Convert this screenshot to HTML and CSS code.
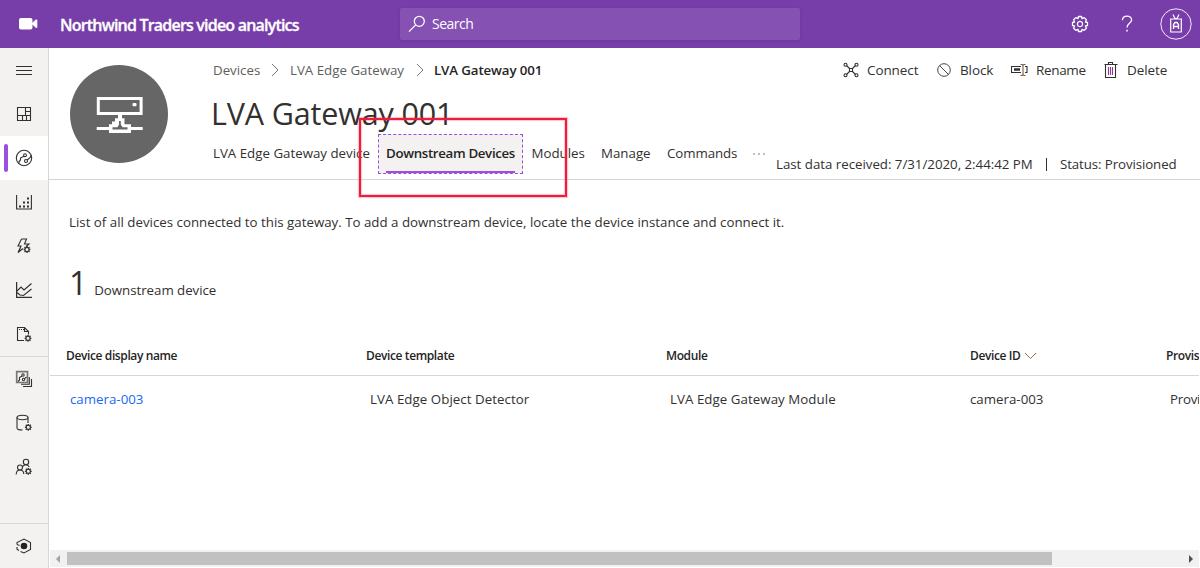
FILE: index.html
```html
<!DOCTYPE html>
<html lang="en">
<head>
<meta charset="utf-8">
<title>Northwind Traders video analytics</title>
<link rel="stylesheet" href="styles.css">
</head>
<body>
<svg class="defs" width="0" height="0">
  <defs>
    <g id="mini-gear" fill="none">
      <circle r="2.1" stroke-width="1.2"/>
      <path d="M0-3.4v1.2M0 2.2v1.2M-3.4 0h1.2M2.2 0h1.2M-2.5-2.5l.9.9M1.6 1.6l.9.9M2.5-2.5l-.9.9M-1.6 1.6l-.9.9" stroke-width="1.3"/>
    </g>
  </defs>
</svg>
<header class="topbar">
  <div class="brand-icon"><svg width="20" height="14" viewBox="0 0 20 14"><rect x="0" y="1" width="13.5" height="11.5" rx="2" fill="#fff"/><path d="M12.5 6.7L16.8 2.6Q18.3 2 18.3 3.5V10Q18.3 11.5 16.8 10.8Z" fill="#fff"/></svg></div>
  <div class="brand">Northwind Traders video analytics</div>
  <div class="search"><svg width="18" height="18" viewBox="0 0 18 18" fill="none" stroke="#fff" stroke-width="1.3"><circle cx="11.3" cy="6.3" r="5"/><path d="M7.7 9.9L1 16.6"/></svg><span>Search</span></div>
  <div class="top-actions">
    <svg width="18" height="18" viewBox="-9 -9 18 18" fill="none" stroke="#fff" stroke-width="1.3" stroke-linejoin="round"><path d="M-1.5-7.5H1.5L2-5.4L4.2-6.4L6.4-4.2L5.4-2L7.5-1.5V1.5L5.4 2L6.4 4.2L4.2 6.4L2 5.4L1.5 7.5H-1.5L-2 5.4L-4.2 6.4L-6.4 4.2L-5.4 2L-7.5 1.5V-1.5L-5.4-2L-6.4-4.2L-4.2-6.4L-2-5.4Z"/><circle r="2.6"/></svg>
    <svg width="12" height="18" viewBox="0 0 12 18" fill="none" stroke="#fff" stroke-width="1.3"><path d="M1.4 5.2C1.4-.2 10.6-.2 10.6 5C10.6 8.2 6 8.6 6 12.5"/><path d="M6 14.8v1.6" stroke-width="1.5"/></svg>
    <svg width="32" height="32" viewBox="0 0 32 32" fill="none" stroke="#fff"><circle cx="16" cy="16" r="15.2" stroke-width=".9"/><path d="M10.700 11H21.300V24H10.700Z" stroke-width="1.2"/><path d="M13 6.500L15 10.500M19 6.500L17 10.500M14.500 10.500h3" stroke-width="1.200"/><path d="M13.500 21V16.500L15 14.500H17L18.500 16.500V21M13.500 18.500H18.500" stroke-width="1.3"/></svg>
  </div>
</header>
<div class="shell">
  <nav class="rail">
    <a class="rail-item"><svg width="16" height="10" viewBox="0 0 16 10" stroke="#323130"><path d="M0 .5h16M0 4.500h16M0 8.500h16"/></svg></a>
    <a class="rail-item"><svg class="ico" width="16" height="16" viewBox="0 0 16 16"><path d="M1.500 1.500h13v13h-13zM9.500 1.500v8M1.500 9.500h13M9.500 5.500h5M10.500 9.500v5M6.500 9.500v5"/></svg></a>
    <a class="rail-item active"><svg class="ico" width="18" height="18" viewBox="0 0 18 18"><circle cx="9" cy="9" r="7.700"/><circle cx="10" cy="6.200" r="1.400"/><circle cx="11" cy="12" r="1.500"/><path d="M8.800 7.200L5.500 9v2L4 12.500v2M12.200 11l3-2.500 1-2"/></svg></a>
    <a class="rail-item"><svg class="ico" width="16" height="16" viewBox="0 0 16 16"><path d="M.6 1v14h14.800V1"/><path d="M3 12.500h2M7 12.500h2M11 12.500h2M7 8.500h2M11 8.500h2M11 4.500h2" stroke-width="2"/></svg></a>
    <a class="rail-item"><svg class="ico" width="16" height="18" viewBox="0 0 16 18"><path d="M5.500 2h5L8.500 7H13L10 9.500M5.500 2L2 9h3L2 15.500l5-4M5 9l-2.500 6.500"/><use href="#mini-gear" x="11" y="12.500"/></svg></a>
    <a class="rail-item"><svg class="ico" width="16" height="16" viewBox="0 0 16 16"><path d="M.6 0v15.400H16" stroke-width="1.300"/><path d="M1 9l4-4 3 3 7.500-6.500M1 10.500l3 2.500 3.500.5L15.500 7"/></svg></a>
    <a class="rail-item"><svg class="ico" width="16" height="16" viewBox="0 0 16 16"><path d="M8 14.500H1.500v-13h7l4 4v3M8.500 1.500v4h4M3 3.500h1M5 3.500h1M7 3.500h1"/><use href="#mini-gear" x="12" y="12.300"/></svg></a>
    <a class="rail-item divided"><svg class="ico" width="18" height="18" viewBox="0 0 18 18"><path d="M1.700 1.700h10.800v10.800H1.700z" stroke="#777" stroke-width="1.700"/><path d="M14.300 7v7.300H6M16.500 9v7.500H8"/><circle cx="8" cy="5" r="1.200"/><circle cx="8.500" cy="9.500" r="1.200"/><path d="M7 6L4.500 7.500V10L3 11.500M9.500 8.700l2-1.700"/></svg></a>
    <a class="rail-item"><svg class="ico" width="18" height="18" viewBox="0 0 18 18"><ellipse cx="7.500" cy="3.500" rx="5.500" ry="2.200"/><path d="M2 3.500v10.500c0 1.200 2 2 5.500 2M13 3.500V9"/><use href="#mini-gear" x="13.300" y="13.300"/></svg></a>
    <a class="rail-item"><svg class="ico" width="18" height="18" viewBox="0 0 18 18"><circle cx="11" cy="4" r="2.700"/><circle cx="5" cy="9.500" r="2.500"/><path d="M1.200 16.500c0-6 7.500-6 7.600-.5M7.500 8.500l2-1.500c2-.5 4 .5 4.800 2"/><use href="#mini-gear" x="13.300" y="13.300"/></svg></a>
    <a class="rail-item rail-bottom"><svg class="ico" width="18" height="16" viewBox="0 0 18 16"><path d="M2 6.500V4.500L9 1l6.500 3.500v7L9 15l-3.500-1.500M4 12.500l-2-1.200V9"/><circle cx="9" cy="8" r="3.300" fill="#222" stroke="none"/><path d="M2 6.500l2.500 1"/></svg></a>
  </nav>
  <main class="content">
    <section class="device-head">
      <div class="avatar"><svg width="48" height="40" viewBox="0 0 48 40" fill="#fff"><rect x="3.300" y="4.500" width="42.800" height="15" fill="none" stroke="#fff" stroke-width="3"/><rect x="37.500" y="9" width="4" height="3.300" rx="1"/><path d="M23 21h4v3.300h2.500v6H36V33h11.700v3H36v3H14v-3H1.700v-3H14v-2.700h3V27.500h3v-3.200h3zM24 27v3.500l-1.500 2.800h-5v2.200h15v-2.200h-5l-1.700-2.800V27z" fill-rule="evenodd"/></svg></div>
      <div class="head-main">
        <div class="head-top">
          <div class="crumbs"><a class="c1">Devices</a><svg width="9" height="14" viewBox="0 0 9 14"><path d="M1 1l6 6-6 6"/></svg><a class="c2">LVA Edge Gateway</a><svg width="9" height="14" viewBox="0 0 9 14"><path d="M1 1l6 6-6 6"/></svg><b>LVA Gateway 001</b></div>
          <div class="commands">
            <span class="cmd connect"><svg class="ico" width="16" height="16" viewBox="0 0 16 16"><path d="M3.500 3.500l3 3M12.500 3.500l-3 3M3.500 12.500l3-3M12.500 12.500l-3-3M6.500 6.500h3v3h-3z"/><circle cx="2.500" cy="2.800" r="1.500"/><circle cx="13.500" cy="2.800" r="1.500"/><circle cx="2.500" cy="13.200" r="1.500"/><circle cx="13.500" cy="13.200" r="1.500"/></svg><span>Connect</span></span>
            <span class="cmd block"><svg class="ico thin" width="16" height="16" viewBox="0 0 16 16"><circle cx="8" cy="8" r="6.300"/><path d="M3.500 3.500l9 9"/></svg><span>Block</span></span>
            <span class="cmd rename"><svg class="ico" width="18" height="14" viewBox="0 0 18 14"><path d="M10 3.500H.5v6H10M14 3.500h2v6h-2"/><path d="M3 6.500h6" stroke-width="2.500"/><path d="M12 2v10M9.500 1.500h1.500l1 1 1-1h1.500M9.500 12.500h1.500l1-1 1 1h1.500" stroke="#75604f"/></svg><span>Rename</span></span>
            <span class="cmd delete"><svg class="ico" width="16" height="18" viewBox="0 0 16 18"><path d="M1.500 3.500h13M2.500 3.500v13h10v-13M5.500 3.500v-2h4v2"/><path d="M5.500 6v8M7.500 6v8M9.500 6v8" stroke="#8c3b8c"/></svg><span>Delete</span></span>
          </div>
        </div>
        <h1>LVA Gateway 001</h1>
        <div class="head-bottom">
          <div class="tabs">
            <a class="tab t-device">LVA Edge Gateway device</a>
            <a class="tab selected"><span>Downstream Devices</span></a>
            <a class="tab t-modules">Modules</a>
            <a class="tab t-manage">Manage</a>
            <a class="tab t-commands">Commands</a>
            <a class="tab more"><i></i><i></i><i></i></a>
          </div>
          <div class="status"><span class="received">Last data received: 7/31/2020, 2:44:42 PM</span><span class="bar"></span><span class="provision">Status: Provisioned</span></div>
        </div>
      </div>
    </section>
    <section class="list">
      <p class="intro">List of all devices connected to this gateway. To add a downstream device, locate the device instance and connect it.</p>
      <div class="count"><strong>1</strong><span>Downstream device</span></div>
      <div class="table">
        <div class="row table-head"><div>Device display name</div><div>Device template</div><div>Module</div><div class="sorted"><span>Device ID</span><svg width="13" height="8" viewBox="0 0 13 8"><path d="M1 1l5.500 5.500L12 1"/></svg></div><div>Provisioning status</div></div>
        <div class="row"><div><a class="link">camera-003</a></div><div class="w-template">LVA Edge Object Detector</div><div class="w-module">LVA Edge Gateway Module</div><div>camera-003</div><div class="w-status">Provisioned</div></div>
      </div>
      <div class="scrollbar"><span class="arrow left"></span><span class="thumb"></span><span class="arrow right"></span></div>
    </section>
  </main>
</div>
<div class="callout"></div>
</body>
</html>
```

FILE: styles.css
```css
* { box-sizing: border-box; }
html, body { margin: 0; height: 568px; overflow: hidden; }
body { font: 13.300px/20px "Open Sans", "Noto Sans", sans-serif; color: #323130; background: #fff; }
svg { display: block; flex: none; }
.defs { position: absolute; }
.ico { fill: none; stroke: #323130; stroke-width: 1.100; }
.thin { stroke-width: .9; }

.topbar { height: 48px; display: flex; align-items: center; background: #773da8; color: #fff; }
.brand-icon { width: 60px; padding-left: 19px; }
.brand { width: 340px; font-size: 16px; font-weight: 600; letter-spacing: -.8px; -webkit-text-stroke: .3px #fff; white-space: nowrap; padding-top: 1px; }
.search { width: 400px; height: 32px; border-radius: 2px; background: #8551b2; display: flex; align-items: center; gap: 6px; padding-left: 8px; box-shadow: 0 1px 3px #6a3596; }
.search span { font-size: 14px; letter-spacing: -.5px; }
.top-actions { flex: 1; display: flex; justify-content: flex-end; align-items: center; padding-right: 8px; }
.top-actions svg + svg { margin-left: 32px; }
.top-actions svg:last-child { margin-left: 27px; }

.shell { display: flex; height: 520px; }
.rail { width: 49px; background: #f3f2f1; border-right: 1px solid #d6d6d6; display: flex; flex-direction: column; }
.rail-item { height: 44px; flex: none; display: flex; align-items: center; justify-content: center; }
.rail-item:first-child { padding-top: 2px; }
.rail-item.active { background: #fff; position: relative; }
.active::before { content: ""; position: absolute; left: 4px; top: 8px; width: 4px; height: 28px; border-radius: 2px; background: #9b4fdf; }
.divided { border-top: 1px solid #d6d6d6; height: 45px; }
.rail-bottom { margin-top: auto; border-top: 1px solid #d6d6d6; height: 45px; }

.content { flex: 1; min-width: 0; display: flex; flex-direction: column; }
.device-head { height: 132px; flex: none; border-bottom: 1px solid #d6d6d6; display: flex; padding-left: 21px; }
.avatar { width: 98px; height: 98px; margin-top: 17px; border-radius: 50%; background: #666; display: flex; align-items: center; justify-content: center; flex: none; }
.head-main { flex: 1; min-width: 0; padding-left: 37px; }
.head-top { display: flex; height: 44px; align-items: center; justify-content: space-between; padding-left: 8px; }
.crumbs { display: flex; align-items: center; color: #605e5c; white-space: nowrap; }
.crumbs svg { fill: none; stroke: #777; margin: 0 10px 0 11px; }
.crumbs b { font-weight: 600; color: #252423; letter-spacing: -.12px; margin-left: -1px; }
.c1 { width: 47px; }
.c2 { width: 115px; }
.commands { display: flex; padding-right: 32px; font-size: 13.500px; }
.cmd { display: flex; align-items: center; gap: 8px; white-space: nowrap; }
.connect { width: 93px; }
.connect span { letter-spacing: -.1px; }
.block { width: 75px; }
.block span { letter-spacing: -.1px; }
.rename { width: 92px; gap: 7px; }
.rename span { letter-spacing: -.35px; }
.delete { width: 65px; }
.delete span { letter-spacing: -.1px; }
h1 { margin: 0; padding: 1px 0 0 6px; height: 42px; font-size: 30.500px; letter-spacing: -.15px; line-height: 40px; font-weight: 400; white-space: nowrap; }
.head-bottom { display: flex; height: 46px; }
.tabs { display: flex; width: 571px; flex: none; }
.tab { height: 40px; padding: 0 8px; line-height: 39px; white-space: nowrap; }
.t-device { width: 173px; }
.selected { width: 145px; background: #f3f2f1; border: 1px dashed #9b4fdf; padding: 0 7px; font-weight: 600; color: #252423; letter-spacing: -.34px; }
.selected span { display: block; height: 38px; line-height: 37px; border-bottom: 2px solid #9b4fdf; }
.t-modules { width: 70px; padding-left: 8.500px; }
.t-manage { width: 66px; }
.t-commands { width: 86px; letter-spacing: -.08px; }
.more { display: flex; gap: 3px; align-items: center; }
.more i { width: 2px; height: 2px; background: #aaa; border-radius: 1px; }
.status { display: flex; align-items: center; height: 20px; margin-top: 20px; white-space: nowrap; }
.received { width: 269px; letter-spacing: -.02px; }
.bar { width: 1px; height: 13px; background: #323130; margin: 1px 13px 0 1px; }
.provision { letter-spacing: -.1px; }

.list { flex: 1; min-height: 0; display: flex; flex-direction: column; }
.intro { margin: 32px 0 0 20px; height: 20px; white-space: nowrap; }
.count { height: 44px; margin: 29px 0 0 20px; display: flex; align-items: baseline; gap: 7px; letter-spacing: -.04px; }
.count strong { font-size: 32px; line-height: 44px; font-weight: 400; }
.table { margin: 31px 1px 0 1px; overflow: hidden; }
.row { display: grid; grid-template-columns: 300px 300px 300px 200px 200px; height: 47px; line-height: 46px; white-space: nowrap; }
.row > div { padding-left: 20px; }
.table-head { height: 40px; line-height: 40px; font-size: 12px; font-weight: 600; letter-spacing: -.38px; border-bottom: 1px solid #d6d6d6; color: #252423; }
.table-head > div { padding-left: 16px; }
.table-head .sorted { padding-left: 20px; display: flex; align-items: center; gap: 3px; }
.sorted svg { fill: none; stroke: #9a6a4a; }
.link { color: #1a68f5; }
.w-template, .w-module { letter-spacing: .05px; }
.row > .w-status { letter-spacing: -.25px; }
.scrollbar { margin: auto 1px 1px 1px; height: 17px; background: #f1f1f1; display: flex; align-items: center; }
.arrow { border: 4px solid transparent; }
.left { border-left: 0; border-right: 4px solid #a3a3a3; width: 4px; margin: 0 7px 0 6px; }
.right { border-right: 0; border-left: 4px solid #505050; margin: 0 6px 0 auto; }
.thumb { width: 985px; height: 13px; background: #c1c1c1; }

.callout { position: absolute; left: 359px; top: 118px; width: 208px; height: 79px; border: 2px solid #f01c3c; box-shadow: 0 0 1px 1px #ef234040, inset 0 0 1px 1px #ef234040; }
```
